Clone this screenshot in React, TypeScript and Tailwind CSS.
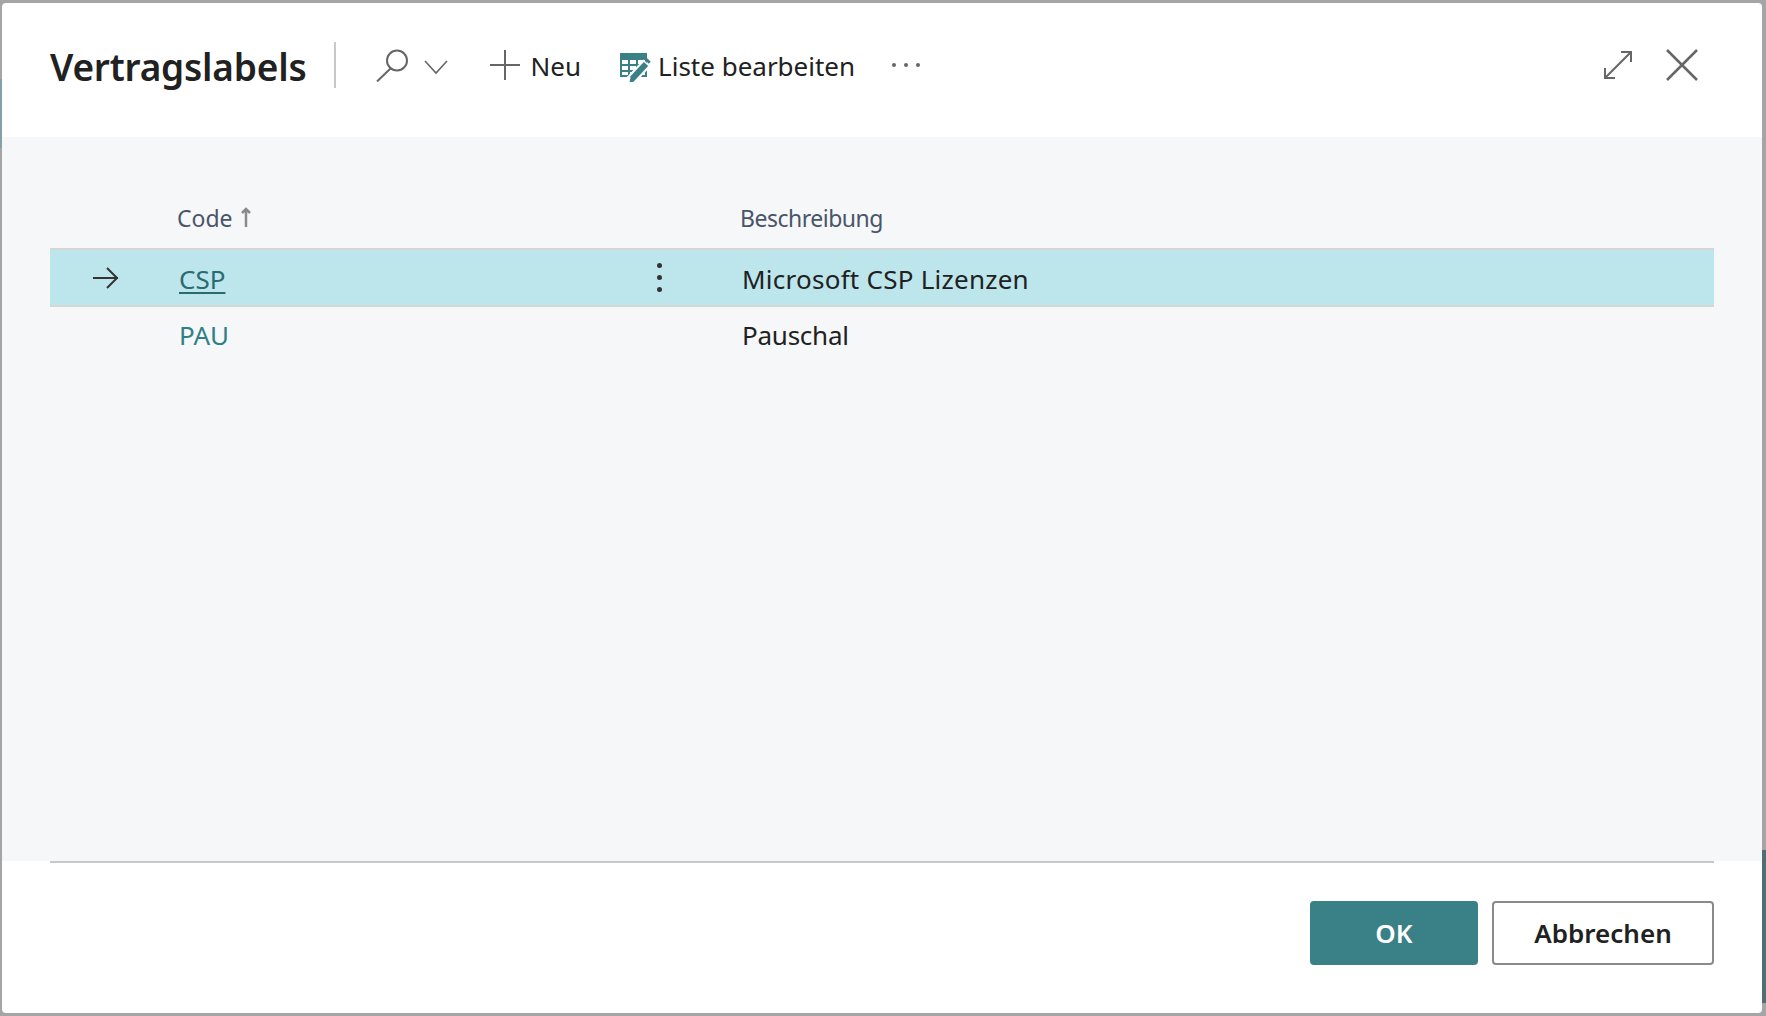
const font = "font-['Noto_Sans','Open_Sans',sans-serif]"

function SearchIcon() {
  return (
    <svg width="33" height="33" viewBox="0 0 33 33" fill="none" stroke="#666" strokeWidth="2">
      <circle cx="21" cy="11.5" r="10" />
      <path d="M14.5 19.5 L1 32.5" />
    </svg>
  )
}

function EditListIcon() {
  return (
    <svg width="31" height="29" viewBox="0 0 31 29">
      <path d="M0 0h27v24H0z" fill="#3a8087" />
      <path d="M2 7h6v4H2zM10 7h6v4h-6zM18 7h7v4h-7zM2 13h6v4H2zM10 13h6v4h-6zM18 13h7v4h-7zM2 19h6v3H2zM10 19h6v3h-6zM18 19h7v3h-7z" fill="#fff" />
      <path d="M10 28L27 10" stroke="#fff" strokeWidth="10" />
      <path d="M12 26L26 11" stroke="#3a8087" strokeWidth="6" />
      <path d="M27 9l2-2" stroke="#3a8087" strokeWidth="5" />
      <path d="M10 29l1-4 3 3z" fill="#3a8087" stroke="#3a8087" />
    </svg>
  )
}

function ExpandIcon() {
  return (
    <svg width="28" height="28" viewBox="0 0 28 28" fill="none" stroke="#666" strokeWidth="2">
      <path d="M2 26L26 2M17 1h10v10M1 17v10h10" />
    </svg>
  )
}

export default function App() {
  return (
    <div className={`relative flex h-[1016px] w-full flex-col bg-[#a5a5a5] pt-[3px] pr-[4px] pb-[3px] pl-[2px] ${font}`}>
      {/* bits of the page behind the dialog */}
      <div className="absolute top-[79px] left-0 h-[69px] w-[2px] bg-[#85a0a8]" />
      <div className="absolute right-0 bottom-[13px] h-[153px] w-[4px] bg-[#4f6f74]" />
      <div className="relative flex flex-1 flex-col overflow-hidden rounded-[4px] bg-white">
        <header className="flex h-[134px] shrink-0 items-center pr-[64px] pb-[10px] pl-[48px]">
          <h1 className="mt-[2px] text-[37px] leading-none font-semibold tracking-[-0.2px] text-[#212121]">Vertragslabels</h1>
          <div className="mr-[40px] ml-[27px] h-[46px] w-[2px] bg-[#c8c8c8]" />
          <SearchIcon />
          <svg className="mt-[4px] ml-[15px]" width="24" height="15" viewBox="0 0 24 15" fill="none" stroke="#666" strokeWidth="1.6">
            <path d="M1 1l11 12L23 1" />
          </svg>
          <svg className="ml-[42px]" width="30" height="30" viewBox="0 0 30 30" fill="none" stroke="#666" strokeWidth="2">
            <path d="M15 0v30M0 15h30" />
          </svg>
          <span className="mt-[2px] ml-[11px] text-[26px] leading-none text-[#212121]">Neu</span>
          <div className="mt-[4px] ml-[39px]"><EditListIcon /></div>
          <span className="mt-[2px] ml-[7px] text-[26px] leading-none text-[#212121]">Liste bearbeiten</span>
          <div className="ml-[37px] flex gap-[8px]">
            <span className="h-[4px] w-[4px] rounded-full bg-[#666]" />
            <span className="h-[4px] w-[4px] rounded-full bg-[#666]" />
            <span className="h-[4px] w-[4px] rounded-full bg-[#666]" />
          </div>
          <div className="ml-auto flex items-center gap-[34px]">
            <ExpandIcon />
            <svg width="32" height="32" viewBox="0 0 32 32" fill="none" stroke="#666" strokeWidth="2.5">
              <path d="M1 1l30 30M31 1L1 31" />
            </svg>
          </div>
        </header>

        <main className="flex flex-1 flex-col bg-[#f6f7f9] px-[48px]">
          <div className="mt-[70px] flex h-[43px] items-start border-b-2 border-[#d6d6d6]">
            <div className="flex w-[690px] items-center pl-[127px]">
              <span className="text-[23px] leading-none text-[#4a5568]">Code</span>
              <svg className="ml-[7px] -mt-[3px]" width="12" height="20" viewBox="0 0 12 20" fill="none" stroke="#8a8a8a" strokeWidth="2.5">
                <path d="M6 20V2M2 6l4-4 4 4" />
              </svg>
            </div>
            <span className="text-[23px] leading-none tracking-[-0.5px] text-[#4a5568]">Beschreibung</span>
          </div>
          <div className="flex h-[57px] items-center border-b-2 border-[#d6d6d6] bg-[#bde6ec]">
            <div className="flex w-[129px] justify-end pr-[60px]">
              <svg width="26" height="22" viewBox="0 0 26 22" fill="none" stroke="#333" strokeWidth="2">
                <path d="M0 11h25M14 1l10 10-10 10" />
              </svg>
            </div>
            <a className="mt-[2px] w-[414px] text-[26px] leading-none text-[#2a6b72] underline decoration-2 underline-offset-[3px]">CSP</a>
            <div className="flex w-[132px] flex-col items-center gap-[7px]">
              <span className="h-[5px] w-[5px] rounded-full bg-[#333]" />
              <span className="h-[5px] w-[5px] rounded-full bg-[#333]" />
              <span className="h-[5px] w-[5px] rounded-full bg-[#333]" />
            </div>
            <span className="mt-[2px] ml-[17px] text-[26px] leading-none tracking-[0.25px] text-[#212121]">Microsoft CSP Lizenzen</span>
          </div>
          <div className="flex h-[56px] items-center">
            <a className="ml-[129px] w-[563px] text-[26px] leading-none text-[#2f7f86]">PAU</a>
            <span className="text-[26px] leading-none tracking-[-0.25px] text-[#212121]">Pauschal</span>
          </div>
        </main>

        <footer className="flex h-[152px] shrink-0 flex-col px-[48px]">
          <div className="h-[2px] bg-[#c8c8c8]" />
          <div className="mt-[38px] flex justify-end gap-[14px]">
            <button className="h-[64px] w-[168px] rounded-[4px] bg-[#3a8087] text-[26px] font-semibold text-white">OK</button>
            <button className="h-[64px] w-[222px] rounded-[4px] border-2 border-[#8a8a8a] bg-white text-[26px] font-semibold text-[#212121]">Abbrechen</button>
          </div>
        </footer>
      </div>
    </div>
  )
}
